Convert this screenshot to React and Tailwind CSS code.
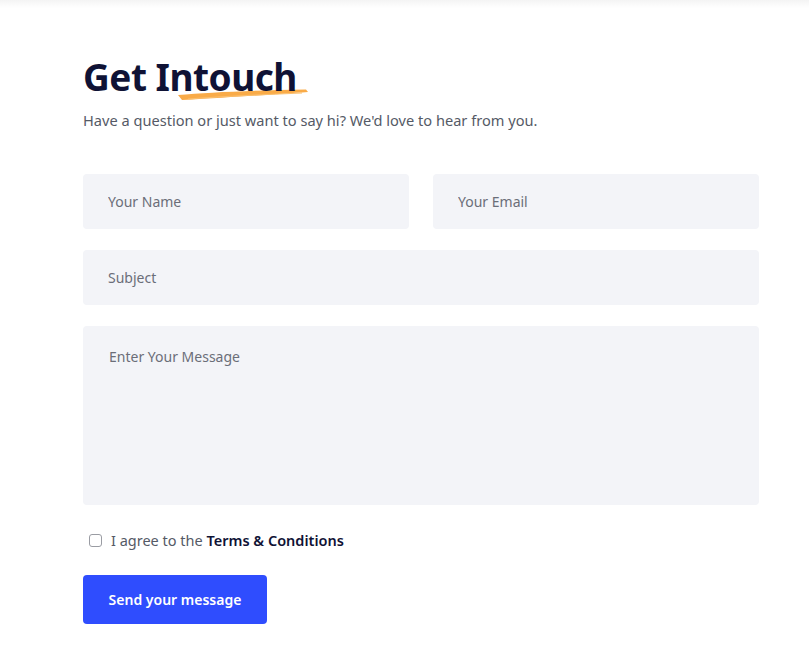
import { useState } from 'react';

const App = () => {
    const [agree, setAgree] = useState(false);

    return (
        <div className="min-h-screen bg-white font-['Noto_Sans',sans-serif]">
            {/* faint header shadow */}
            <div className="h-2 bg-gradient-to-b from-[#f4f4f4] to-white" />

            <div className="w-[676px] ml-[83px] pt-[47px]">
                <div className="relative inline-block">
                    <svg
                        className="absolute left-[95px] top-[33px]"
                        width="130"
                        height="13"
                        viewBox="0 0 130 13"
                    >
                        <path
                            d="M0 7 C30 4.5, 70 2.5, 128 1.5 L130 4 C100 6, 60 9, 4 12 Z"
                            fill="#f9ab48"
                        />
                        <path d="M10 11 C50 8, 90 6.5, 124 5" stroke="#fbc070" strokeWidth="1" fill="none" />
                    </svg>
                    <h1 className="relative text-[37px] leading-[44px] font-bold text-[#0f1235] tracking-[-0.5px]">
                        Get Intouch
                    </h1>
                </div>
                <p className="mt-[11px] text-[14.6px] text-[#555a66]">
                    Have a question or just want to say hi? We'd love to hear from you.
                </p>

                <form className="mt-[42px] flex flex-col gap-[21px]" onSubmit={e => e.preventDefault()}>
                    <div className="grid grid-cols-2 gap-6">
                        <input
                            type="text"
                            placeholder="Your Name"
                            className="h-[55px] rounded bg-[#f3f4f8] px-[25px] text-[14px] text-[#333] placeholder:text-[#6b6e78] outline-none"
                        />
                        <input
                            type="email"
                            placeholder="Your Email"
                            className="h-[55px] rounded bg-[#f3f4f8] px-[25px] text-[14px] text-[#333] placeholder:text-[#6b6e78] outline-none"
                        />
                    </div>
                    <input
                        type="text"
                        placeholder="Subject"
                        className="h-[55px] rounded bg-[#f3f4f8] px-[25px] text-[14px] text-[#333] placeholder:text-[#6b6e78] outline-none"
                    />
                    <textarea
                        placeholder="Enter Your Message"
                        className="h-[179px] resize-none rounded bg-[#f3f4f8] px-[26px] py-[20px] text-[14px] text-[#333] placeholder:text-[#6b6e78] outline-none"
                    />

                    <label className="mt-[4px] flex items-center gap-[9px] pl-[6px] text-[14.5px] text-[#555a66]">
                        <input
                            type="checkbox"
                            checked={agree}
                            onChange={e => setAgree(e.target.checked)}
                            className="h-[13px] w-[13px] appearance-none rounded-[3px] border border-[#9a9ca3] bg-white"
                        />
                        <span>
                            I agree to the <span className="font-semibold text-[#0f1235]">Terms &amp; Conditions</span>
                        </span>
                    </label>

                    <div className="mt-[2px]">
                        <button
                            type="submit"
                            className="h-[49px] w-[184px] rounded bg-[#2f4dfe] text-[14px] font-semibold text-white"
                        >
                            Send your message
                        </button>
                    </div>
                </form>
            </div>
        </div>
    );
};

export default App;
